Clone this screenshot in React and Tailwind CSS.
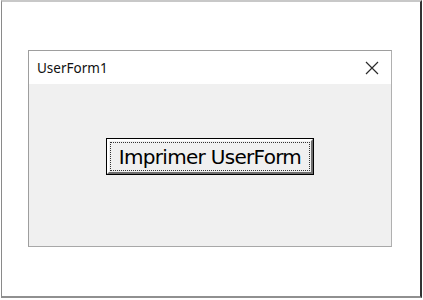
import { useState } from 'react';

function CloseIcon() {
    return (
        <svg width="14" height="14" viewBox="0 0 14 14" className="block">
            <path d="M1 1 L13 13 M13 1 L1 13" stroke="#2b2b2b" strokeWidth="1.2" fill="none" />
        </svg>
    );
}

export default function App() {
    const [clicked, setClicked] = useState(false);

    return (
        <div className="w-[423px] h-[300px] bg-white overflow-hidden">
            <div className="ml-[1px] w-[421px] h-[298px] border-t-2 border-l border-r-2 border-b-2 border-t-[#c8c8c8] border-l-[#8a8a8a] border-r-[#333333] border-b-[#909090] bg-white pl-[26px] pt-[48px]">
                {/* UserForm window */}
                <div className="w-[364px] h-[197px] border border-[#9e9e9e] border-r-[#b0b0b0] border-b-[#a8a8a8] flex flex-col">
                    <div className="h-[33px] bg-white flex items-center justify-between pl-[8px] pr-[12px] shrink-0">
                        <span className="text-[13.5px] text-[#111111] font-['Noto_Sans',sans-serif] leading-none pt-[2px]">UserForm1</span>
                        <CloseIcon />
                    </div>
                    <div className="flex-1 bg-[#f0f0f0] flex justify-center pt-[54px]">
                        <button
                            onClick={() => setClicked(!clicked)}
                            className="w-[208px] h-[37px] border border-black bg-[#f0f0f0] p-0"
                        >
                            <div className="w-full h-full border-2 border-t-white border-l-white border-r-[#6e6e6e] border-b-[#6e6e6e] p-[1px]">
                                <div className="w-full h-full border border-dotted border-[#333333] flex items-center justify-center">
                                    <span className="text-[20px] leading-none text-black font-['DejaVu_Sans',sans-serif] tracking-[-0.7px]">
                                        Imprimer UserForm
                                    </span>
                                </div>
                            </div>
                        </button>
                    </div>
                </div>
            </div>
        </div>
    );
}
